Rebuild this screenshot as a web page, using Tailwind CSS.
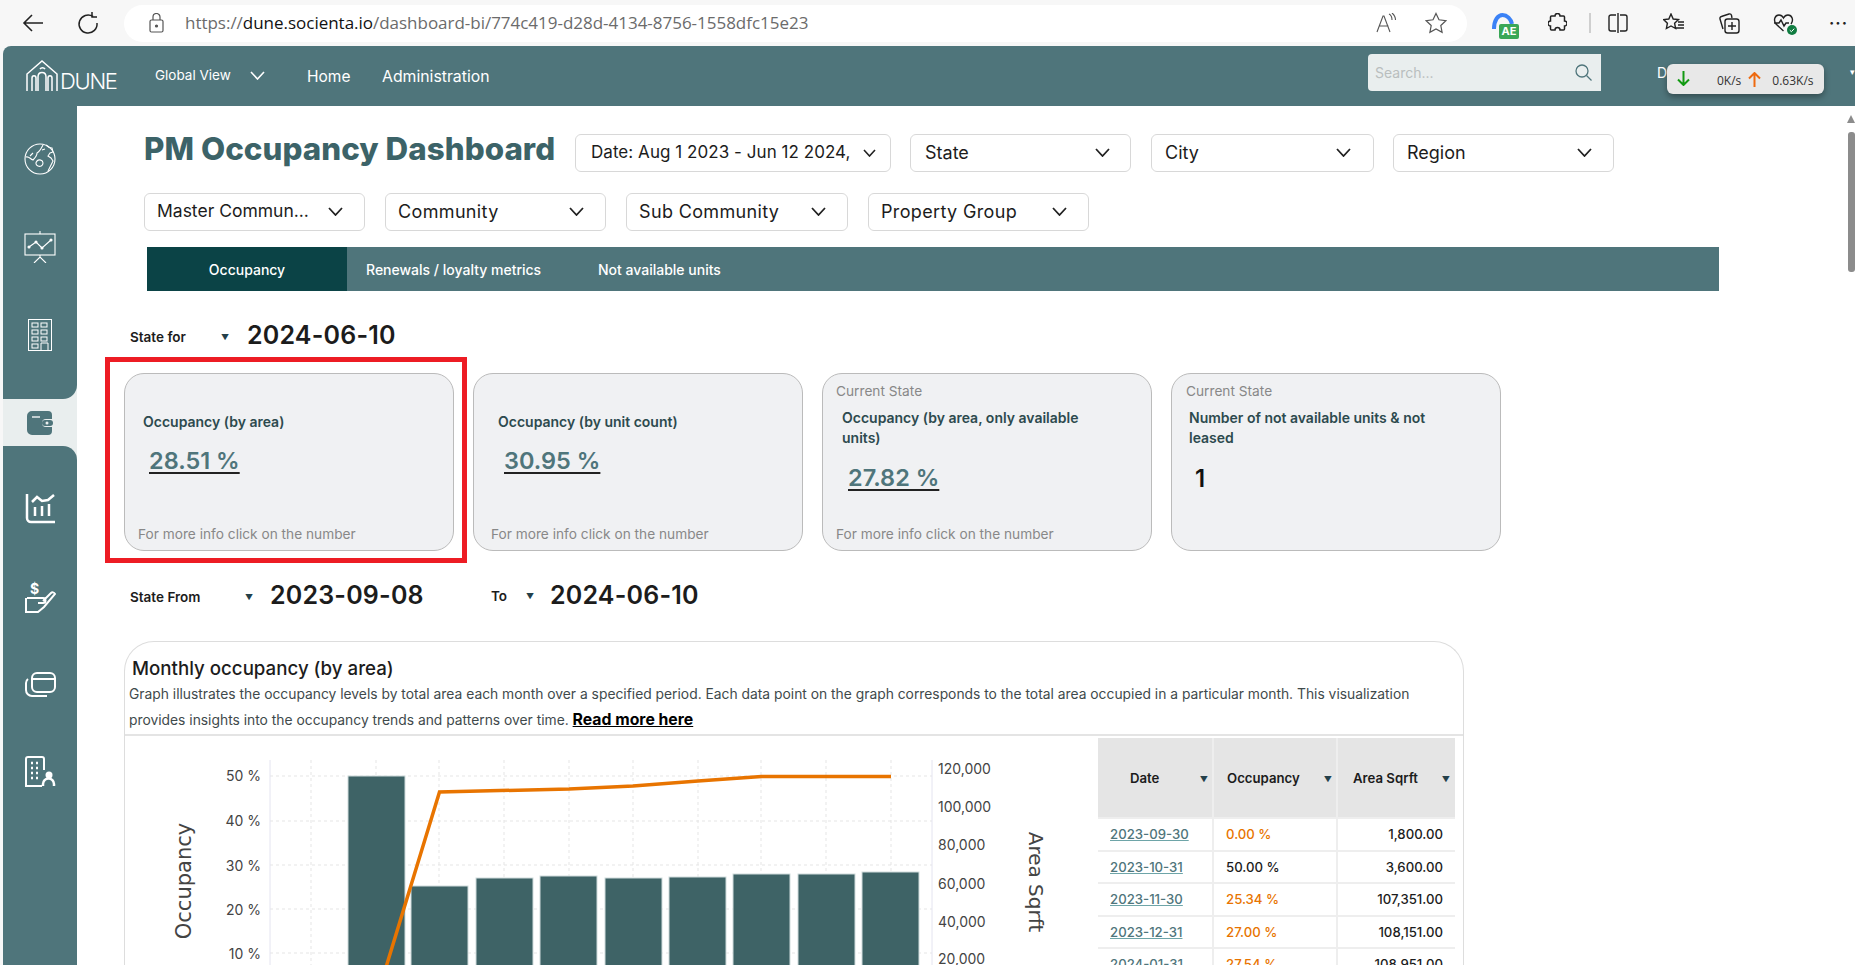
<!DOCTYPE html>
<html lang="en">
<head>
<meta charset="utf-8">
<title>PM Occupancy Dashboard</title>
<script src="https://cdn.jsdelivr.net/npm/@tailwindcss/browser@4"></script>
</head>
<body class="w-[1855px] h-[965px] overflow-hidden bg-[#f7f7f7] font-['Inter',sans-serif] text-[#1c1c1c]">
<!-- Browser toolbar -->
<div class="h-[46px] flex items-center relative">
  <svg class="ml-[22px] w-[22px] h-[22px] text-[#222]" viewBox="0 0 22 22" fill="none" stroke="currentColor" stroke-width="1.6"><path d="M21 11H2M10 3l-8 8 8 8"/></svg>
  <svg class="ml-[33px] w-[22px] h-[24px] text-[#222]" viewBox="0 0 22 24" fill="none" stroke="currentColor" stroke-width="1.5"><path d="M16 5.500A9 9 0 1 0 20 12M15 1v5h5"/></svg>
  <div class="ml-[25px] w-[1343px] h-[37px] bg-white rounded-full flex items-center">
    <svg class="ml-[25px] w-[15px] h-[20px] text-[#555]" viewBox="0 0 15 20" fill="none" stroke="currentColor" stroke-width="1.2"><rect x="1" y="7" width="13" height="12" rx="1.5"/><path d="M4 7V4a3.500 3.500 0 0 1 7 0v3"/><circle cx="7.500" cy="13" r="1" fill="currentColor"/></svg>
    <span class="ml-[21px] font-['Open_Sans',sans-serif] text-[17px] tracking-[-0.02px] text-[#6b6b6b] whitespace-nowrap">https://<span class="text-[#111]">dune.socienta.io</span>/dashboard-bi/774c419-d28d-4134-8756-1558dfc15e23</span>
    <svg class="ml-auto w-[22px] h-[20px] text-[#555]" viewBox="0 0 22 20" fill="none" stroke="currentColor" stroke-width="1.1"><path d="M1 19 7 3h1l6 16M3.500 13h9M13 1c2 1 3 3 3 6M16 0c2.500 2 3.500 4 3.500 7"/></svg>
    <svg class="ml-[27px] mr-[20px] w-[22px] h-[22px] text-[#555]" viewBox="0 0 22 22" fill="none" stroke="currentColor" stroke-width="1.2"><path d="m11 1.500 3 6.300 6.800.9-5 4.800 1.300 6.800-6.100-3.300-6.100 3.300 1.300-6.800-5-4.800 6.800-.9z"/></svg>
  </div>
  <div class="ml-[25px] relative w-[27px] h-[27px] mt-[4px]">
    <svg class="w-[27px] h-[27px]" viewBox="0 0 27 27" fill="none"><path d="M2 17C2 8 6 3 10.500 3S19 7 20 12" stroke="#3b82f6" stroke-width="4"/></svg>
    <span class="absolute right-0 bottom-0 w-[20px] h-[15px] bg-[#3aa757] rounded-[2px] text-white text-[11px] font-bold leading-[15px] text-center">AE</span>
  </div>
  <svg class="ml-[29px] w-[19px] h-[20px] text-[#222]" viewBox="0 0 19 20" fill="none" stroke="currentColor" stroke-width="1.5"><path d="M7 3a2.500 2.500 0 0 1 5 0h3.500a1 1 0 0 1 1 1v4a2.500 2.500 0 0 1 0 5v3a1 1 0 0 1-1 1H12a2.500 2.500 0 0 0-5 0H3.500a1 1 0 0 1-1-1v-3a2.500 2.500 0 0 1 0-5V4a1 1 0 0 1 1-1z"/></svg>
  <div class="ml-[22px] w-[2px] h-[20px] bg-[#cfcfcf]"></div>
  <svg class="ml-[17px] w-[20px] h-[20px] text-[#222]" viewBox="0 0 20 20" fill="none" stroke="currentColor" stroke-width="1.4"><path d="M8 2H3a2 2 0 0 0-2 2v12a2 2 0 0 0 2 2h5M12 2h5a2 2 0 0 1 2 2v12a2 2 0 0 1-2 2h-5M10 0v20"/></svg>
  <svg class="ml-[35px] w-[22px] h-[20px] text-[#222]" viewBox="0 0 22 20" fill="none" stroke="currentColor" stroke-width="1.4"><path d="m8 1 2.200 5 5.300.6-3.900 3.600 1 5.300L8 13l-4.600 2.500 1-5.300L.6 6.600 5.800 6zM15 9h6M15 12h6M13 15h8"/></svg>
  <svg class="ml-[33px] w-[22px] h-[22px] text-[#222]" viewBox="0 0 22 22" fill="none" stroke="currentColor" stroke-width="1.4"><path d="M5 17 2 7a2 2 0 0 1 1.400-2.500L11 2a2 2 0 0 1 2.500 1.300L14 6"/><rect x="7" y="7" width="14" height="14" rx="2.500"/><path d="M14 10v8M10 14h8"/></svg>
  <div class="ml-[33px] relative w-[22px] h-[22px]">
    <svg class="w-[22px] h-[22px] text-[#222]" viewBox="0 0 22 22" fill="none" stroke="currentColor" stroke-width="1.4"><path d="M10.500 19 3 12C0 8 2 3 6 3c2 0 3.500 1 4.500 3C11.500 4 13 3 15 3c4 0 6 5 3 9M1 11h5l2-3 3 6 2-3h3"/></svg>
    <svg class="absolute right-[-2px] bottom-[-1px] w-[10px] h-[10px]" viewBox="0 0 10 10"><circle cx="5" cy="5" r="5" fill="#107c41"/><path d="m2.800 5.200 1.600 1.500 2.800-3" fill="none" stroke="white" stroke-width="1"/></svg>
  </div>
  <span class="ml-[34px] text-[16px] font-bold leading-none tracking-[1px] text-[#222]">···</span>
</div>

<!-- App frame -->
<div class="ml-[3px] h-[919px] flex flex-col rounded-tl-lg overflow-hidden relative">
  <!-- Header -->
  <header class="h-[60px] shrink-0 bg-[#4f757b] flex items-center text-white">
    <div class="ml-[23px] w-[91px] flex items-end shrink-0">
      <svg class="w-[33px] h-[32px] shrink-0" viewBox="0 0 33 32" fill="none" stroke="white" stroke-width="1.500"><path d="M1 31V14L16 1l15 13v17M6 31V18c0-3 4-3 4 0v13M12 31V17c0-6 8-6 8 0v14M22 31V18c0-3 4-3 4 0v13M14 9a3 3 0 0 1 5 0"/></svg>
      <span class="text-[22px] leading-[22px] font-light ml-[1px] tracking-[-1.3px]">DUNE</span>
    </div>
    <span class="ml-[38px] text-[13.5px] w-[79px] -mt-[2px] whitespace-nowrap">Global View</span>
    <svg class="ml-[16px] -mt-[2px] w-[15px] h-[9px]" viewBox="0 0 15 9" fill="none" stroke="white" stroke-width="1.6"><path d="m1 1 6.500 7L14 1"/></svg>
    <span class="ml-[42px] text-[15.5px] w-[45px] mt-[2px]">Home</span>
    <span class="ml-[30px] text-[15.8px] w-[109px] whitespace-nowrap mt-[2px]">Administration</span>
    <div class="ml-[877px] w-[233px] h-[37px] -mt-[7px] bg-[#e9eeee] rounded-l-[4px] flex items-center text-[14px] text-[#b9bebe] pl-[7px]">
      Search...
      <svg class="ml-auto mr-[9px] w-[17px] h-[17px] text-[#4f757b]" viewBox="0 0 17 17" fill="none" stroke="currentColor" stroke-width="1.3"><circle cx="7" cy="7" r="6"/><path d="m11.500 11.500 5 5"/></svg>
    </div>
    <span class="ml-[56px] -mt-[8px] text-[14px] whitespace-nowrap w-[180px]">Dune Property Manager</span>
    <span class="ml-[13px] -mt-[8px] text-[9px]">▾</span>
  </header>
  <!-- Net speed widget -->
  <div class="absolute left-[1664px] top-[18px] w-[157px] h-[30px] bg-[#e8e8e8] rounded-[6px] shadow-[0_3px_6px_rgba(0,0,0,0.35)] flex items-center text-[12px] text-[#333] font-['Open_Sans',sans-serif] pt-[4px]">
    <svg class="ml-[10px] w-[13px] h-[15px] -mt-[6px] text-[#129a12]" viewBox="0 0 13 15" fill="none" stroke="currentColor" stroke-width="2"><path d="M6.500 0v14M1 8.500l5.500 5.500L12 8.500"/></svg>
    <span class="ml-[27px]">0K/s</span>
    <svg class="ml-[7px] w-[13px] h-[15px] -mt-[3px] text-[#ee6a10]" viewBox="0 0 13 15" fill="none" stroke="currentColor" stroke-width="2"><path d="M6.500 15V1M1 6.500 6.500 1 12 6.500"/></svg>
    <span class="ml-[11px]">0.63K/s</span>
  </div>

  <div class="flex-1 flex min-h-0">
    <!-- Sidebar -->
    <aside class="w-[74px] shrink-0 flex flex-col bg-[#e9eeee]">
      <div class="h-[293px] bg-[#4f757b] rounded-br-[14px] flex flex-col items-center text-white">
        <svg class="mt-[37px] w-[32px] h-[32px]" viewBox="0 0 32 32" fill="none" stroke="white" stroke-width="1.100"><circle cx="16" cy="16" r="15"/><path d="M2 14c3-1 4 2 7 3 2-2 4-4 4-7 2-1 4-4 6-8M22 2c2 2 3 3 6 3l1 4-3 1-2 3 3 2 2 3-2 4-3 6M13 18c2-2 6-1 6 2s-3 4-5 3-3-3-1-5zM6 13l3-3M18 7l3-1"/></svg>
        <svg class="mt-[56px] w-[32px] h-[32px]" viewBox="0 0 32 32" fill="none" stroke="white" stroke-width="1.100"><path d="M16 0v3"/><rect x="1" y="3" width="30" height="21"/><path d="m5 16 7-5 6 6 9-8"/><path d="M16 24v2M10 32l6-6 6 6"/><circle cx="5" cy="16" r="1" fill="white"/><circle cx="12" cy="11" r="1" fill="white"/><circle cx="18" cy="17" r="1" fill="white"/><circle cx="27" cy="9" r="1" fill="white"/></svg>
        <svg class="mt-[56px] w-[24px] h-[32px]" viewBox="0 0 24 32" fill="none" stroke="white" stroke-width="1"><rect x=".5" y=".5" width="23" height="31"/><rect x="4" y="4" width="6" height="4"/><rect x="13" y="4" width="6" height="4"/><rect x="4" y="11" width="6" height="4"/><rect x="13" y="11" width="6" height="4"/><rect x="4" y="18" width="6" height="4"/><rect x="13" y="18" width="6" height="4"/><rect x="4" y="25" width="6" height="4"/><path d="M13 31v-7h7v7"/></svg>
      </div>
      <div class="h-[47px] flex items-center justify-center">
        <svg class="w-[26px] h-[24px]" viewBox="0 0 26 24"><path d="M5 0h16a4 4 0 0 1 4 4v4h-6a4 4 0 0 0 0 8h6v4a4 4 0 0 1-4 4H5a5 5 0 0 1-5-5V5a5 5 0 0 1 5-5z" fill="#4f757b"/><path d="M5 6h8" stroke="#e9eeee" stroke-width="1.500"/><rect x="15" y="9" width="11" height="6" rx="3" fill="#4f757b"/><circle cx="20" cy="12" r="1.500" fill="#e9eeee"/></svg>
      </div>
      <div class="flex-1 bg-[#4f757b] rounded-tr-[14px] flex flex-col items-center">
        <svg class="mt-[47px] w-[31px] h-[31px]" viewBox="0 0 31 31" fill="none" stroke="white" stroke-width="2.500"><path d="M2 1v24a4 4 0 0 0 4 4h24"/><path d="m7 9 5-5 5 4 6-1 6-5"/><path d="M10 23v-9M17 23v-10M24 23v-12"/></svg>
        <svg class="mt-[57px] w-[31px] h-[32px]" viewBox="0 0 31 32" fill="none" stroke="white" stroke-width="2"><path d="M2 17h16a2 2 0 0 1 0 5h-5M1 17v14h12l6-5 11-13c-1-2-3-2-4-1l-8 8"/><text x="5" y="13" fill="white" stroke="none" font-size="14" font-weight="700" font-family="Inter, sans-serif">$</text></svg>
        <svg class="mt-[59px] w-[31px] h-[25px]" viewBox="0 0 31 25" fill="none" stroke="white" stroke-width="2"><rect x="7" y="1" width="23" height="19" rx="5"/><path d="M7 7h23M3 7a5 5 0 0 0-2 4v7a6 6 0 0 0 6 6h15"/></svg>
        <svg class="mt-[59px] w-[31px] h-[31px]" viewBox="0 0 31 31" fill="none" stroke="white" stroke-width="2"><path d="M19 14V3a2 2 0 0 0-2-2H3a2 2 0 0 0-2 2v27h16"/><path d="M6 7h2M11 7h2M6 12h2M11 12h2M6 17h2M11 17h2M6 22h2M11 22h2" stroke-width="2.500"/><circle cx="24" cy="19" r="3.500" fill="white" stroke="none"/><path d="M18 30v-2a5 5 0 0 1 11 0v2" stroke-width="2.500"/></svg>
      </div>
    </aside>

    <!-- Main -->
    <main class="flex-1 bg-white flex min-w-0 overflow-hidden">
      <div class="w-[1770px] shrink-0">
        <!-- Filters row 1 -->
        <div class="mt-[28px] ml-[67px] flex items-center h-[38px]">
          <h1 class="w-[431px] text-[31.300px] font-extrabold text-[#3c6368] tracking-[0.05px] whitespace-nowrap -mt-[7px]">PM Occupancy Dashboard</h1>
          <div class="w-[316px] h-[38px] border border-[#d8d8d8] rounded-[6px] flex items-center justify-between pl-[15px] pr-[14px] text-[17px] tracking-[0.05px] whitespace-nowrap">Date: Aug 1 2023 - Jun 12 2024,<svg class="w-[13px] h-[8px]" viewBox="0 0 13 8" fill="none" stroke="#222" stroke-width="1.600"><path d="m1 1 5.500 6L12 1"/></svg></div>
          <div class="ml-[19px] w-[221px] h-[38px] border border-[#d8d8d8] rounded-[6px] flex items-center justify-between pl-[14px] pr-[20px] pb-[2px] text-[18px]">State<svg class="w-[15px] h-[9px]" viewBox="0 0 15 9" fill="none" stroke="#222" stroke-width="1.800"><path d="m1 1 6.500 7L14 1"/></svg></div>
          <div class="ml-[20px] w-[223px] h-[38px] border border-[#d8d8d8] rounded-[6px] flex items-center justify-between pl-[13px] pr-[22px] pb-[2px] text-[18px]">City<svg class="w-[15px] h-[9px]" viewBox="0 0 15 9" fill="none" stroke="#222" stroke-width="1.800"><path d="m1 1 6.500 7L14 1"/></svg></div>
          <div class="ml-[19px] w-[221px] h-[38px] border border-[#d8d8d8] rounded-[6px] flex items-center justify-between pl-[13px] pr-[21px] pb-[2px] text-[18px]">Region<svg class="w-[15px] h-[9px]" viewBox="0 0 15 9" fill="none" stroke="#222" stroke-width="1.800"><path d="m1 1 6.500 7L14 1"/></svg></div>
        </div>
        <!-- Filters row 2 -->
        <div class="mt-[21px] ml-[67px] flex items-center gap-[20px] h-[38px] text-[18px] tracking-[0.35px]">
          <div class="w-[221px] h-[38px] border border-[#d8d8d8] rounded-[6px] flex items-center justify-between pl-[12px] pr-[21px] pb-[2px]"><span class="whitespace-nowrap text-[17.500px] tracking-[0px]">Master Commun...</span><svg class="w-[15px] h-[9px]" viewBox="0 0 15 9" fill="none" stroke="#222" stroke-width="1.800"><path d="m1 1 6.500 7L14 1"/></svg></div>
          <div class="w-[221px] h-[38px] border border-[#d8d8d8] rounded-[6px] flex items-center justify-between pl-[12px] pr-[21px] pb-[2px]">Community<svg class="w-[15px] h-[9px]" viewBox="0 0 15 9" fill="none" stroke="#222" stroke-width="1.800"><path d="m1 1 6.500 7L14 1"/></svg></div>
          <div class="w-[222px] h-[38px] border border-[#d8d8d8] rounded-[6px] flex items-center justify-between pl-[12px] pr-[21px] pb-[2px]">Sub Community<svg class="w-[15px] h-[9px]" viewBox="0 0 15 9" fill="none" stroke="#222" stroke-width="1.800"><path d="m1 1 6.500 7L14 1"/></svg></div>
          <div class="w-[221px] h-[38px] border border-[#d8d8d8] rounded-[6px] flex items-center justify-between pl-[12px] pr-[21px] pb-[2px]">Property Group<svg class="w-[15px] h-[9px]" viewBox="0 0 15 9" fill="none" stroke="#222" stroke-width="1.800"><path d="m1 1 6.500 7L14 1"/></svg></div>
        </div>
        <!-- Tabs -->
        <nav class="mt-[16px] ml-[70px] w-[1572px] h-[44px] bg-[#4f757b] flex items-center text-white text-[14px] font-medium">
          <div class="w-[200px] h-full bg-[#0b4346] flex items-center justify-center">Occupancy</div>
          <span class="ml-[19px] w-[175px] whitespace-nowrap">Renewals / loyalty metrics</span>
          <span class="ml-[57px] whitespace-nowrap">Not available units</span>
        </nav>
        <!-- State for -->
        <div class="mt-[26px] ml-[53px] h-[38px] flex items-center">
          <span class="w-[88px] text-[13.500px] font-semibold mt-[2px]">State for</span>
          <span class="text-[8px] text-[#24404a] w-[29px] mt-[2px] ml-[3px] -mr-[3px]">▼</span>
          <span class="text-[25px] font-semibold tracking-[0.2px]">2024-06-10</span>
        </div>
        <!-- Cards -->
        <div class="mt-[18px] ml-[47px] flex gap-[19px]">
          <div class="relative w-[330px] h-[178px] bg-[#f0f1f3] border border-[#bbbbbb] rounded-[20px] flex flex-col pl-[18px]">
            <div class="absolute -left-[20px] -top-[17px] -right-[14px] -bottom-[13px] border-[5px] border-[#ed1c24]"></div>
            <div class="mt-[37px] text-[14px] font-semibold text-[#2d4a4e]">Occupancy (by area)</div>
            <a class="mt-[11px] ml-[6px] text-[23.500px] font-semibold text-[#4f757b] underline decoration-[#222] underline-offset-[3px]">28.51 %</a>
            <div class="mt-auto mb-[5px] -ml-[5px] text-[13.700px] text-[#888888]">For more info click on the number</div>
          </div>
          <div class="w-[330px] h-[178px] bg-[#f0f1f3] border border-[#bbbbbb] rounded-[20px] flex flex-col pl-[18px]">
            <div class="mt-[37px] ml-[6px] text-[14px] font-semibold text-[#2d4a4e]">Occupancy (by unit count)</div>
            <a class="mt-[11px] ml-[12px] text-[23.500px] font-semibold text-[#4f757b] underline decoration-[#222] underline-offset-[3px]">30.95 %</a>
            <div class="mt-auto mb-[5px] -ml-[1px] text-[13.700px] text-[#888888]">For more info click on the number</div>
          </div>
          <div class="w-[330px] h-[178px] bg-[#f0f1f3] border border-[#bbbbbb] rounded-[20px] flex flex-col pl-[13px]">
            <div class="mt-[7px] text-[13.700px] text-[#888888]">Current State</div>
            <div class="mt-[6px] ml-[6px] w-[250px] text-[14px] leading-[20px] font-semibold text-[#2d4a4e]">Occupancy (by area, only available units)</div>
            <a class="mt-[12px] ml-[12px] text-[23.500px] font-semibold text-[#4f757b] underline decoration-[#222] underline-offset-[3px]">27.82 %</a>
            <div class="mt-auto mb-[5px] text-[13.700px] text-[#888888]">For more info click on the number</div>
          </div>
          <div class="w-[330px] h-[178px] bg-[#f0f1f3] border border-[#bbbbbb] rounded-[20px] flex flex-col pl-[14px]">
            <div class="mt-[7px] text-[13.700px] text-[#888888]">Current State</div>
            <div class="mt-[6px] ml-[3px] w-[260px] text-[14px] leading-[20px] font-semibold text-[#2d4a4e]">Number of not available units &amp; not leased</div>
            <div class="mt-[13px] ml-[9px] text-[24px] font-semibold text-[#111]">1</div>
          </div>
        </div>
        <!-- State from -->
        <div class="mt-[26px] ml-[53px] h-[38px] flex items-center">
          <span class="w-[115px] text-[13.500px] font-semibold mt-[2px]">State From</span>
          <span class="text-[8px] text-[#24404a] w-[25px] mt-[2px]">▼</span>
          <span class="w-[221px] text-[25px] font-semibold tracking-[0.2px]">2023-09-08</span>
          <span class="w-[35px] text-[13.500px] font-semibold">To</span>
          <span class="text-[8px] text-[#24404a] w-[24px]">▼</span>
          <span class="text-[25px] font-semibold tracking-[0.2px]">2024-06-10</span>
        </div>
        <!-- Monthly panel -->
        <section class="mt-[26px] ml-[47px] w-[1340px] border-t border-x border-[#dddddd] rounded-t-[30px]">
          <h2 class="mt-[14px] ml-[7px] h-[25px] text-[18.700px] font-medium leading-[25px]">Monthly occupancy (by area)</h2>
          <p class="pl-[4px] text-[13.840px] leading-[26px] text-[#3f4a4c] pb-[1px] border-b-2 border-[#e4e4e4] whitespace-nowrap">Graph illustrates the occupancy levels by total area each month over a specified period. Each data point on the graph corresponds to the total area occupied in a particular month. This visualization<br>provides insights into the occupancy trends and patterns over time. <a class="font-bold text-[15.800px] text-black underline">Read more here</a></p>
          <div class="flex">
            <svg class="w-[973px] h-[229px] shrink-0" viewBox="125 736 973 229" font-family="Inter, sans-serif">
              <g stroke="#e5e5e5" stroke-dasharray="3 3" stroke-width="1">
                <path d="M270 776H932M270 821H932M270 865H932M270 909H932M270 953H932"/>
                <path d="M311 760V965M376 760V965M439 760V965M504 760V965M569 760V965M633 760V965M698 760V965M761 760V965M826 760V965M891 760V965"/>
              </g>
              <path d="M270 760V965M932 760V965" stroke="#e4e4f0"/>
              <g fill="#3e6366" stroke="#cfdcdc" stroke-width="1">
                <rect x="348" y="776" width="57" height="200"/>
                <rect x="411" y="886" width="57" height="90"/>
                <rect x="476" y="878" width="57" height="98"/>
                <rect x="540" y="876" width="57" height="100"/>
                <rect x="605" y="878" width="57" height="98"/>
                <rect x="669" y="877" width="57" height="99"/>
                <rect x="733" y="874" width="57" height="102"/>
                <rect x="798" y="874" width="57" height="102"/>
                <rect x="862" y="872" width="57" height="104"/>
              </g>
              <polyline points="376,1000 439.500,792 569,789 633,786 698,781 761.500,776.500 891,776.500" fill="none" stroke="#e87400" stroke-width="3.500"/>
              <g fill="#444" font-size="14" text-anchor="end">
                <text x="261" y="781">50 %</text>
                <text x="261" y="826">40 %</text>
                <text x="261" y="871">30 %</text>
                <text x="261" y="915">20 %</text>
                <text x="261" y="959">10 %</text>
              </g>
              <g fill="#444" font-size="14">
                <text x="938" y="774">120,000</text>
                <text x="938" y="812">100,000</text>
                <text x="938" y="850">80,000</text>
                <text x="938" y="889">60,000</text>
                <text x="938" y="927">40,000</text>
                <text x="938" y="964">20,000</text>
              </g>
              <text transform="translate(191 881) rotate(-90)" text-anchor="middle" font-size="21" fill="#444" font-family="'DejaVu Sans', sans-serif">Occupancy</text>
              <text transform="translate(1029 882) rotate(90)" text-anchor="middle" font-size="20" fill="#444" font-family="'DejaVu Sans', sans-serif">Area Sqrft</text>
            </svg>
            <div class="mt-[2px] w-[357px] grid grid-cols-[114px_122px_117px] grid-rows-[79px_30.500px_30.500px_30.500px_30.500px_30.500px] gap-[2px] bg-[#eeeeee] text-[13.200px] font-medium">
              <div class="bg-[#e5e5e5] flex items-center font-semibold pl-[32px] pt-[2px]">Date<span class="ml-auto mr-[4px] text-[8px] text-[#24404a]">▼</span></div>
              <div class="bg-[#e5e5e5] flex items-center font-semibold pl-[13px] pt-[2px]">Occupancy<span class="ml-auto mr-[4px] text-[8px] text-[#24404a]">▼</span></div>
              <div class="bg-[#e5e5e5] flex items-center font-semibold pl-[15px] pt-[2px] whitespace-nowrap">Area Sqrft<span class="ml-auto mr-[5px] text-[8px] text-[#24404a]">▼</span></div>
              <div class="bg-white flex items-center pl-[12px] pt-[2px] text-[#4f757b]"><a class="underline decoration-[#6ea5a8]">2023-09-30</a></div>
              <div class="bg-white flex items-center pl-[12px] pt-[2px] text-[#e87400]">0.00 %</div>
              <div class="bg-white flex items-center justify-end pr-[12px] pt-[2px]">1,800.00</div>
              <div class="bg-white flex items-center pl-[12px] pt-[2px] text-[#4f757b]"><a class="underline decoration-[#6ea5a8]">2023-10-31</a></div>
              <div class="bg-white flex items-center pl-[12px] pt-[2px]">50.00 %</div>
              <div class="bg-white flex items-center justify-end pr-[12px] pt-[2px]">3,600.00</div>
              <div class="bg-white flex items-center pl-[12px] pt-[2px] text-[#4f757b]"><a class="underline decoration-[#6ea5a8]">2023-11-30</a></div>
              <div class="bg-white flex items-center pl-[12px] pt-[2px] text-[#e87400]">25.34 %</div>
              <div class="bg-white flex items-center justify-end pr-[12px] pt-[2px]">107,351.00</div>
              <div class="bg-white flex items-center pl-[12px] pt-[2px] text-[#4f757b]"><a class="underline decoration-[#6ea5a8]">2023-12-31</a></div>
              <div class="bg-white flex items-center pl-[12px] pt-[2px] text-[#e87400]">27.00 %</div>
              <div class="bg-white flex items-center justify-end pr-[12px] pt-[2px]">108,151.00</div>
              <div class="bg-white flex items-center pl-[12px] pt-[2px] text-[#4f757b]"><a class="underline decoration-[#6ea5a8]">2024-01-31</a></div>
              <div class="bg-white flex items-center pl-[12px] pt-[2px] text-[#e87400]">27.54 %</div>
              <div class="bg-white flex items-center justify-end pr-[12px] pt-[2px]">108,951.00</div>
            </div>
          </div>
        </section>
      </div>
      <!-- Scrollbar -->
      <div class="ml-auto w-[9px] flex flex-col items-center pt-[9px]">
        <span class="w-0 h-0 border-x-[4px] border-b-[8px] border-x-transparent border-b-[#8c8c8c]"></span>
        <span class="mt-[9px] w-[7px] h-[140px] rounded-[3px] bg-[#8c8c8c]"></span>
      </div>
    </main>
  </div>
</div>
</body>
</html>
